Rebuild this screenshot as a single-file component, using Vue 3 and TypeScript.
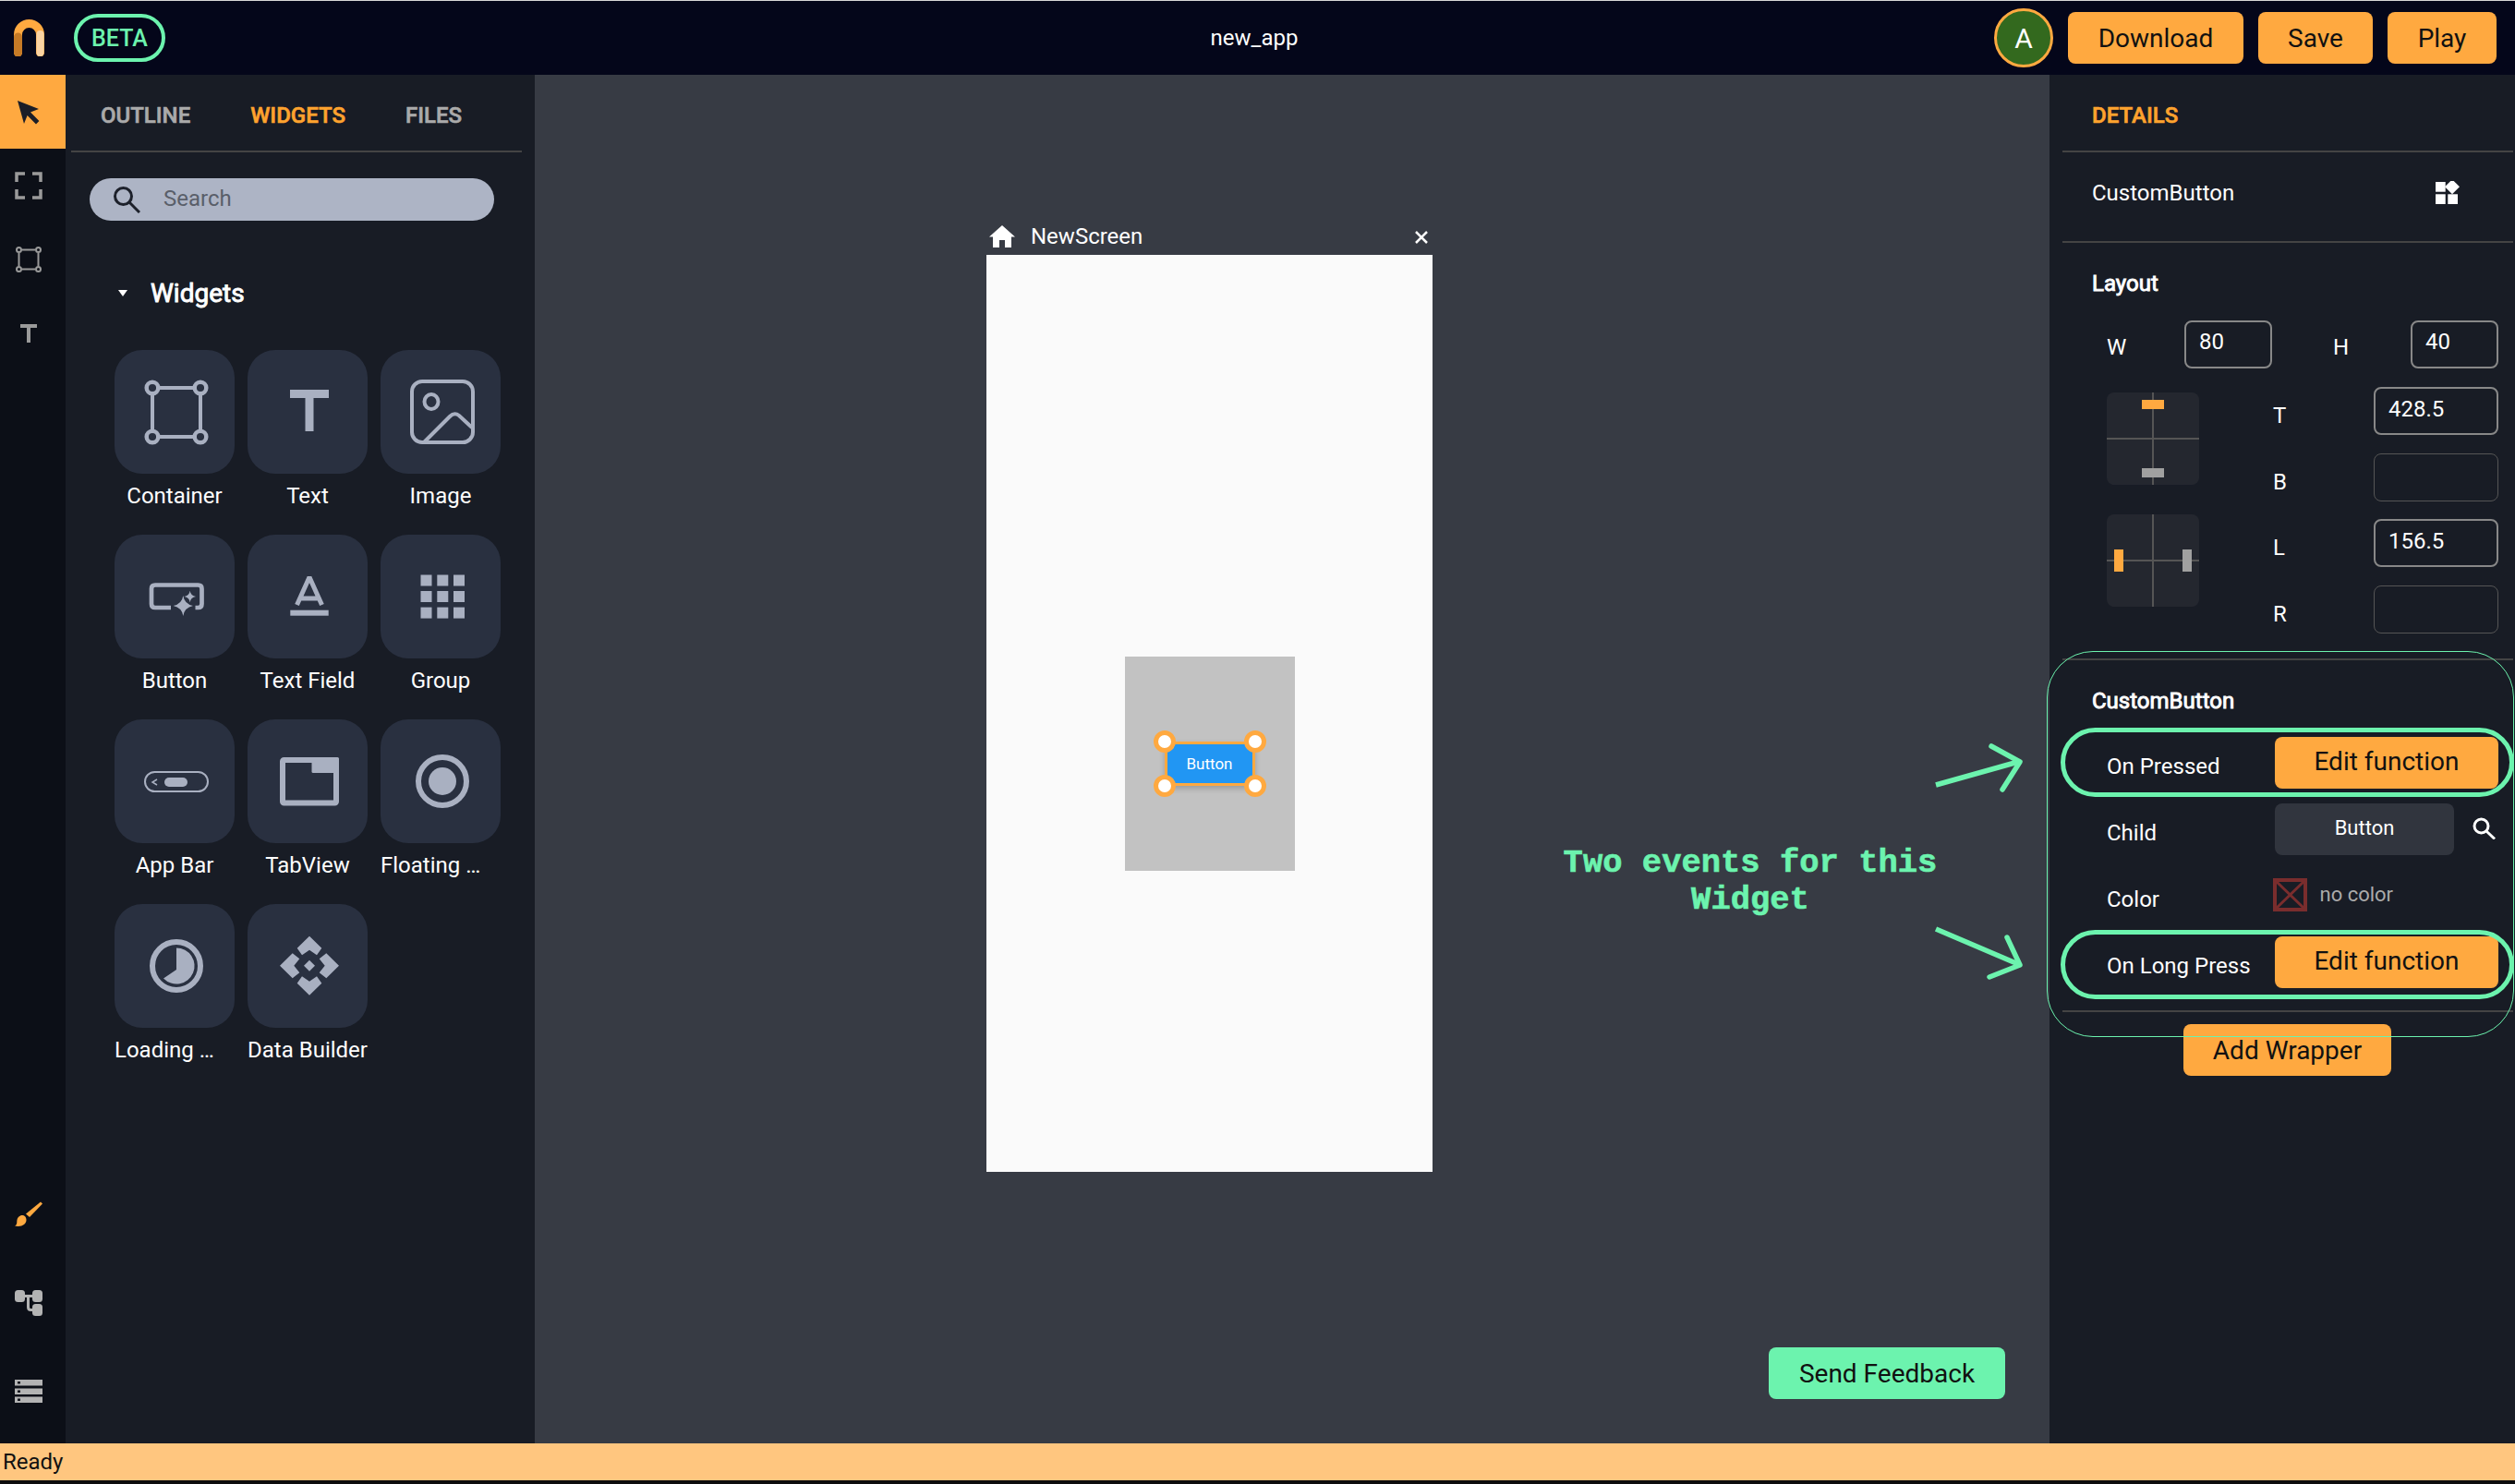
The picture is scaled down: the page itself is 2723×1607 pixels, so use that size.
<template>
  <div class="app">
    <header class="topbar">
      <div class="brand">
        <svg class="logo" width="33" height="40" viewBox="0 0 33 40">
          <path d="M4.5 36V16.5a12 12 0 0 1 24 0V36" fill="none" stroke="#ffa940" stroke-width="9" stroke-linecap="round" />
          <path d="M4.5 36V19" fill="none" stroke="#c67a26" stroke-width="9" stroke-linecap="round" />
          <path d="M28.5 36V16" fill="none" stroke="#fbd3a3" stroke-width="8" stroke-linecap="round" />
        </svg>
        <span class="beta">BETA</span>
      </div>
      <div class="title">new_app</div>
      <div class="actions">
        <div class="avatar">A</div>
        <button class="btn download">Download</button>
        <button class="btn save">Save</button>
        <button class="btn play">Play</button>
      </div>
    </header>

    <main class="main">
      <nav class="rail">
        <div class="rail-item active">
          <svg width="26" height="27" viewBox="0 0 26 27"><path d="M1 1l23 9-9 3.6 9.4 9.4-3.4 3.4-9.4-9.4L8 26z" fill="#1b1e27" /></svg>
        </div>
        <div class="rail-item">
          <svg width="30" height="30" viewBox="0 0 30 30" fill="none" stroke="#9a9a9a" stroke-width="3.5"><path d="M2 11V2h9M19 2h9v9M28 19v9h-9M11 28H2v-9" /></svg>
        </div>
        <div class="rail-item">
          <svg width="28" height="28" viewBox="0 0 28 28" fill="none" stroke="#9a9a9a" stroke-width="2"><path d="M7 3.500h14M7 24.500h14M3.500 7v14M24.500 7v14" /><circle cx="3.500" cy="3.500" r="2.500" /><circle cx="24.500" cy="3.500" r="2.500" /><circle cx="3.500" cy="24.500" r="2.500" /><circle cx="24.500" cy="24.500" r="2.500" /></svg>
        </div>
        <div class="rail-item">
          <svg width="18" height="20" viewBox="0 0 18 20" fill="#9a9a9a"><path d="M0 0h18v4H11v16H7V4H0z" /></svg>
        </div>
        <div class="rail-bottom">
          <div class="rail-item tall">
            <svg width="30" height="28" viewBox="0 0 30 28" fill="#ffa940"><path d="M28 0.500l2 2-14 14.500-4-3.500z" /><path d="M6 15.500c3-1.500 6.500 0.500 6.500 4.500 0 5-5.500 8-12.500 6.500 3-1.500 2-3.500 2.500-6.500 0.300-2 1.800-3.700 3.500-4.500z" /></svg>
          </div>
          <div class="rail-item tall">
            <svg width="30" height="28" viewBox="0 0 30 28"><g fill="#b3b3b3"><rect x="0" y="0" width="11" height="13" rx="3.500" /><rect x="19" y="0" width="11" height="13" rx="3.500" /><rect x="19" y="15" width="11" height="13" rx="3.500" /></g><path d="M11 6.500h8M14.500 6.500v12q0 3 3 3H20" fill="none" stroke="#b3b3b3" stroke-width="3" /></svg>
          </div>
          <div class="rail-item tall">
            <svg width="30" height="26" viewBox="0 0 30 26"><g fill="#b3b3b3"><rect y="0" width="30" height="6.500" /><rect y="9.500" width="30" height="6.500" /><rect y="18.500" width="30" height="6.500" /></g><g fill="#15171f"><rect x="3" y="2" width="3" height="2.500" /><rect x="3" y="11.500" width="3" height="2.500" /><rect x="3" y="20.500" width="3" height="2.500" /></g></svg>
          </div>
        </div>
      </nav>

      <aside class="left-panel">
        <div class="tabs">
          <span class="tab">OUTLINE</span>
          <span class="tab current">WIDGETS</span>
          <span class="tab">FILES</span>
        </div>
        <div class="tabs-line"></div>
        <div class="search">
          <svg width="30" height="30" viewBox="0 0 30 30" fill="none" stroke="#1d212b" stroke-width="3"><circle cx="11.500" cy="11.500" r="9" /><path d="M18 18l11 11" /></svg>
          <span class="search-text">Search</span>
        </div>
        <div class="group-head">
          <svg width="10" height="7" viewBox="0 0 10 7"><path d="M0 0h10L5 7z" fill="#fff" /></svg>
          <span>Widgets</span>
        </div>
        <div class="tiles">
          <div class="tile" v-for="item in widgets" :key="item.name">
            <svg class="tile-icon" width="130" height="134" viewBox="0 0 130 134" v-html="item.icon"></svg>
            <div class="tile-label" :class="{ cut: item.cut }">{{ item.name }}</div>
          </div>
        </div>
      </aside>

      <section class="canvas">
        <div class="frame">
          <div class="frame-head">
            <svg width="28" height="24" viewBox="0 0 28 24"><path d="M14 0L0 12.500h4V24h7v-8h6v8h7V12.500h4z" fill="#fff" /></svg>
            <span>NewScreen</span>
            <svg class="close" width="14" height="14" viewBox="0 0 14 14"><path d="M1 1l12 12M13 1L1 13" stroke="#fff" stroke-width="2.500" /></svg>
          </div>
          <div class="screen">
            <div class="holder">
              <div class="flat-btn">
                Button
                <i class="handle tl"></i><i class="handle tr"></i><i class="handle bl"></i><i class="handle br"></i>
              </div>
            </div>
          </div>
        </div>

        <div class="note">Two events for this<br />Widget</div>
        <svg class="arrows" width="105" height="265" viewBox="2090 801 105 265" fill="none" stroke="#6cf3ae" stroke-width="5.500">
          <path d="M2096 850L2185 825" />
          <path d="M2156 808L2187 825L2168 855" stroke-linecap="round" stroke-linejoin="round" />
          <path d="M2096 1006L2185 1044" />
          <path d="M2173 1015L2187 1045L2154 1058" stroke-linecap="round" stroke-linejoin="round" />
        </svg>
        <button class="feedback">Send Feedback</button>
      </section>

      <aside class="right-panel">
        <div class="details-head">DETAILS</div>
        <div class="line"></div>
        <div class="name-row">
          <span>CustomButton</span>
          <svg width="26" height="26" viewBox="0 0 26 26" fill="#fff"><rect x="0" y="1" width="10.700" height="10.700" /><rect x="0" y="14.300" width="10.700" height="10.700" /><rect x="13.300" y="14.300" width="10.700" height="10.700" /><path d="M18 -1.700l8 8-8 8-8-8z" /></svg>
        </div>
        <div class="line"></div>

        <h3 class="section-title layout-title">Layout</h3>
        <div class="size-row">
          <span class="lab w-lab">W</span>
          <div class="field strong small">80</div>
          <span class="lab h-lab">H</span>
          <div class="field strong small">40</div>
        </div>
        <div class="position">
          <div class="anchors">
            <div class="anchor">
              <i class="mark horiz top-mark on"></i>
              <i class="mark horiz bottom-mark"></i>
            </div>
            <div class="anchor">
              <i class="mark vert left-mark on"></i>
              <i class="mark vert right-mark"></i>
            </div>
          </div>
          <div class="offsets">
            <template v-for="row in offsets" :key="row.label">
              <span class="lab">{{ row.label }}</span>
              <div class="field" :class="{ strong: row.value }">{{ row.value }}</div>
            </template>
          </div>
        </div>

        <div class="line custom-line"></div>
        <h3 class="section-title custom-title">CustomButton</h3>
        <div class="prop-row">
          <span class="prop-label">On Pressed</span>
          <button class="btn edit">Edit function</button>
        </div>
        <div class="prop-row">
          <span class="prop-label">Child</span>
          <div class="child-box">Button</div>
          <svg class="child-search" width="25" height="24" viewBox="0 0 25 24" fill="none" stroke="#fff" stroke-width="3"><circle cx="9.500" cy="9.500" r="7.500" /><path d="M15 15l9 8.500" /></svg>
        </div>
        <div class="prop-row">
          <span class="prop-label">Color</span>
          <svg class="swatch" width="37" height="36" viewBox="0 0 37 36" fill="none" stroke="#7a2d2d" stroke-width="4"><rect x="2" y="2" width="33" height="32" /><path d="M3 3l31 30M34 3L3 33" stroke-width="3" /></svg>
          <span class="no-color">no color</span>
        </div>
        <div class="prop-row">
          <span class="prop-label">On Long Press</span>
          <button class="btn edit">Edit function</button>
        </div>
        <div class="line wrap-line"></div>
        <button class="btn wrapper">Add Wrapper</button>

        <div class="ring outer"></div>
        <div class="ring pill first"></div>
        <div class="ring pill second"></div>
      </aside>
    </main>

    <footer class="status">Ready</footer>
  </div>
</template>

<script setup lang="ts">
interface WidgetTile {
  name: string;
  icon: string;
  cut?: boolean;
}

const line = 'fill="none" stroke="#a9b0c1"';
const solid = 'fill="#a9b0c1"';

const widgets: WidgetTile[] = [
  {
    name: 'Container',
    icon: `<g ${line} stroke-width="4.500"><path d="M47 41h40M47 94h40M41 47v41M93 47v41" stroke-width="4"/><circle cx="41" cy="41" r="6.300"/><circle cx="93" cy="41" r="6.300"/><circle cx="41" cy="94" r="6.300"/><circle cx="93" cy="94" r="6.300"/></g>`,
  },
  { name: 'Text', icon: `<path ${solid} d="M46 43h42v9H71.500v36h-9V52H46z"/>` },
  {
    name: 'Image',
    icon: `<g ${line} stroke-width="4"><rect x="34" y="34" width="66" height="66" rx="11"/><ellipse cx="55" cy="56" rx="7.500" ry="8"/><path d="M47 100L75 72q5-5 10-1l14 13"/></g>`,
  },
  {
    name: 'Button',
    icon: `<path ${line} stroke-width="4.700" d="M61 79H44q-4 0-4-4V58.500q0-4 4-4H90.500q4 0 4 4V75q0 4-4 4h-3"/><path ${solid} d="M74.300 66q1.300 9 10.700 11q-9.400 2-10.700 11q-1.300-9-10.700-11q9.400-2 10.700-11zM81.700 60.700q.8 5.500 6.300 6.300q-5.500.8-6.300 6.300q-.8-5.500-6.300-6.300q5.500-.8 6.300-6.300z"/>`,
  },
  {
    name: 'Text Field',
    icon: `<path ${line} stroke-width="5" stroke-linejoin="bevel" d="M53.500 76L67 46l13.500 30M57 69h20"/><rect ${solid} x="46.300" y="81.700" width="41.400" height="6"/>`,
  },
  {
    name: 'Group',
    icon: `<g ${solid}>${[43.5, 61.3, 79]
      .map((x) => [43.5, 61, 78.6].map((y) => `<rect x="${x}" y="${y}" width="12" height="12"/>`).join(''))
      .join('')}</g>`,
  },
  {
    name: 'App Bar',
    icon: `<rect ${line} stroke-width="2" x="33" y="57" width="68" height="21" rx="10.500"/><rect ${solid} x="54" y="63" width="25" height="10" rx="5"/><path ${line} stroke-width="1.500" d="M46 65l-5 3 5 3"/>`,
  },
  {
    name: 'TabView',
    icon: `<rect ${line} stroke-width="6" x="38" y="44" width="58" height="46.500" rx="1.500"/><rect ${solid} x="69.500" y="41" width="29.500" height="17" rx="1.500"/>`,
  },
  {
    name: 'Floating …',
    cut: true,
    icon: `<circle ${line} stroke-width="6" cx="67" cy="67" r="26"/><circle ${solid} cx="67" cy="67" r="15"/>`,
  },
  {
    name: 'Loading …',
    cut: true,
    icon: `<circle ${line} stroke-width="6" cx="67" cy="67" r="26"/><path ${solid} d="M67 47.500A19.500 19.500 0 1 1 53 80.500L67 71z"/>`,
  },
  {
    name: 'Data Builder',
    icon: `<g ${solid} transform="translate(67 66.700)"><path d="M0-32L13.300-19 8-11.500 0-17-8-11.500-13.300-19z"/><path d="M0 32L13.300 19 8 11.500 0 17-8 11.500-13.300 19z"/><path d="M-32 0L-18.300-13.500-10.700-7.500-16.700 0-10.700 7.500-18.300 13.500z"/><path d="M32 0L18.300-13.500 10.700-7.500 16.700 0 10.700 7.500 18.300 13.500z"/><path d="M0-6L6 0 0 6-6 0z"/></g>`,
  },
];

const offsets = [
  { label: 'T', value: '428.5' },
  { label: 'B', value: '' },
  { label: 'L', value: '156.5' },
  { label: 'R', value: '' },
];
</script>

<style>
html,
body {
  margin: 0;
  background: #0d0d0d;
}
</style>

<style scoped>
.app {
  width: 2723px;
  height: 1607px;
  display: flex;
  flex-direction: column;
  box-sizing: border-box;
  border-top: 1px solid #d8d8d8;
  padding-bottom: 4px;
  overflow: hidden;
  background: #0d0d0d;
  color: #fff;
  font-family: Roboto, "Liberation Sans", sans-serif;
  font-size: 24px;
}

.topbar {
  height: 80px;
  flex: none;
  display: grid;
  grid-template-columns: 1fr auto 1fr;
  align-items: center;
  background: #04061a;
}

.brand {
  display: flex;
  align-items: center;
  padding-left: 15px;
}

.logo {
  margin-right: 32px;
}

.beta {
  width: 99px;
  height: 52px;
  box-sizing: border-box;
  display: flex;
  align-items: center;
  justify-content: center;
  border: 4px solid #6cf3ae;
  border-radius: 26px;
  color: #6cf3ae;
  font-size: 25px;
  font-weight: 500;
}

.title {
  margin-right: 7px;
  font-size: 24px;
}

.actions {
  display: flex;
  align-items: center;
  justify-content: flex-end;
  gap: 16px;
  padding-right: 20px;
}

.avatar {
  width: 64px;
  height: 64px;
  box-sizing: border-box;
  display: flex;
  align-items: center;
  justify-content: center;
  border: 3px solid #ffa940;
  border-radius: 50%;
  background: #33691e;
  font-size: 30px;
}

.btn {
  height: 56px;
  padding: 0;
  border: 0;
  border-radius: 8px;
  background: #ffa940;
  color: #111;
  font-family: inherit;
  font-size: 28px;
}

.download {
  width: 190px;
}

.save {
  width: 124px;
}

.play {
  width: 118px;
}

.main {
  flex: 1;
  display: flex;
  min-height: 0;
}

.rail {
  width: 71px;
  flex: none;
  display: flex;
  flex-direction: column;
  padding-bottom: 8px;
  box-sizing: border-box;
  background: #0c0f17;
}

.rail-item {
  height: 80px;
  box-sizing: border-box;
  display: flex;
  align-items: center;
  justify-content: center;
  padding-right: 9px;
}

.rail-item.active {
  background: #ffa940;
}

.rail-item.tall {
  height: 96px;
}

.rail-bottom {
  margin-top: auto;
}

.left-panel {
  width: 508px;
  flex: none;
  background: #181c25;
}

.tabs {
  height: 82px;
  box-sizing: border-box;
  display: flex;
  align-items: center;
  gap: 65px;
  padding: 6px 0 0 38px;
}

.tab {
  color: #aaa;
  font-size: 24px;
  font-weight: 500;
  -webkit-text-stroke: 0.6px currentColor;
}

.tab.current {
  color: #ffa32e;
}

.tabs-line {
  height: 2px;
  margin: 0 14px 0 6px;
  background: #444;
}

.search {
  width: 438px;
  height: 46px;
  box-sizing: border-box;
  display: flex;
  align-items: center;
  gap: 25px;
  margin: 28px 0 0 26px;
  padding-left: 25px;
  border-radius: 23px;
  background: #adb4c5;
  color: #5a5f6a;
}

.search-text {
  margin-top: -3px;
}

.group-head {
  height: 40px;
  display: flex;
  align-items: center;
  gap: 25px;
  margin: 58px 0 0 57px;
  font-size: 28px;
  -webkit-text-stroke: 0.9px #fff;
}

.tiles {
  display: grid;
  grid-template-columns: repeat(3, 130px);
  grid-auto-rows: 200px;
  column-gap: 14px;
  margin: 42px 0 0 53px;
}

.tile-icon {
  display: block;
  border-radius: 30px;
  background: #293040;
}

.tile-label {
  margin-top: 10px;
  line-height: 28px;
  text-align: center;
  white-space: nowrap;
}

.tile-label.cut {
  text-align: left;
}

.canvas {
  flex: 1;
  position: relative;
  box-sizing: border-box;
  padding: 163px 0 0 489px;
  background: #373b44;
}

.frame {
  width: 483px;
}

.frame-head {
  height: 32px;
  display: flex;
  gap: 17px;
  padding-left: 3px;
  line-height: 24px;
  align-items: flex-start;
}

.close {
  margin: 6px 5px 0 auto;
}

.screen {
  height: 993px;
  box-sizing: border-box;
  display: flex;
  justify-content: center;
  padding-top: 435px;
  background: #fafafa;
}

.holder {
  width: 184px;
  height: 232px;
  display: flex;
  align-items: center;
  justify-content: center;
  background: #c2c2c2;
}

.flat-btn {
  position: relative;
  width: 98px;
  height: 48px;
  box-sizing: border-box;
  display: flex;
  align-items: center;
  justify-content: center;
  border: 3px solid #ffa940;
  background: #2196f3;
  box-shadow: 0 3px 6px rgba(0, 0, 0, 0.2);
  font-size: 17px;
}

.handle {
  position: absolute;
  width: 24px;
  height: 24px;
  box-sizing: border-box;
  border: 5px solid #ffa940;
  border-radius: 50%;
  background: #fff;
}

.tl {
  left: -15px;
  top: -15px;
}

.tr {
  right: -15px;
  top: -15px;
}

.bl {
  left: -15px;
  bottom: -15px;
}

.br {
  right: -15px;
  bottom: -15px;
}

.note {
  position: absolute;
  left: 1066px;
  top: 834px;
  width: 500px;
  color: #6cf3ae;
  font-family: "Liberation Mono", monospace;
  font-size: 35.5px;
  font-weight: 700;
  line-height: 40px;
  text-align: center;
  -webkit-text-stroke: 0.6px #6cf3ae;
}

.arrows {
  position: absolute;
  left: 1511px;
  top: 720px;
}

.feedback {
  position: absolute;
  right: 48px;
  bottom: 48px;
  width: 256px;
  height: 56px;
  padding: 0;
  border: 0;
  border-radius: 8px;
  background: #6cf3ae;
  color: #111;
  font-family: inherit;
  font-size: 28px;
}

.right-panel {
  width: 504px;
  flex: none;
  position: relative;
  background: #181c25;
}

.details-head {
  height: 82px;
  box-sizing: border-box;
  padding: 30px 0 0 46px;
  line-height: 28px;
  color: #ffa32e;
  font-size: 24px;
  font-weight: 500;
  -webkit-text-stroke: 0.6px #ffa32e;
}

.line {
  height: 2px;
  margin: 0 2px 0 14px;
  background: #444;
}

.name-row {
  height: 96px;
  box-sizing: border-box;
  display: flex;
  align-items: center;
  justify-content: space-between;
  padding: 0 60px 9px 46px;
}

.section-title {
  margin: 0;
  padding-left: 46px;
  font-size: 24px;
  font-weight: 400;
  line-height: 28px;
  -webkit-text-stroke: 0.9px #fff;
}

.layout-title {
  margin-top: 30px;
}

.size-row {
  display: flex;
  margin: 26px 0 0 62px;
}

.lab {
  padding-top: 7px;
  line-height: 44px;
}

.w-lab {
  width: 84px;
}

.h-lab {
  width: 84px;
  margin-left: 66px;
}

.field {
  height: 52px;
  box-sizing: border-box;
  padding-left: 14px;
  border: 1.5px solid #555;
  border-radius: 8px;
  line-height: 42px;
}

.field.strong {
  border: 2px solid #888;
}

.field.small {
  width: 95px;
}

.position {
  display: flex;
  margin: 20px 0 0 62px;
}

.anchors {
  display: flex;
  flex-direction: column;
  gap: 32px;
  padding-top: 6px;
}

.anchor {
  position: relative;
  width: 100px;
  height: 100px;
  border-radius: 8px;
  background: linear-gradient(#555, #555) center / 2px 100% no-repeat,
    linear-gradient(#555, #555) center / 100% 2px no-repeat, #24272f;
}

.mark {
  position: absolute;
  background: #a0a0a0;
}

.mark.on {
  background: #ffa940;
}

.horiz {
  left: 38px;
  width: 24px;
  height: 10px;
}

.vert {
  top: 38px;
  width: 10px;
  height: 24px;
}

.top-mark {
  top: 8px;
}

.bottom-mark {
  bottom: 8px;
}

.left-mark {
  left: 8px;
}

.right-mark {
  right: 8px;
}

.offsets {
  display: grid;
  grid-template-columns: 109px 135px;
  grid-auto-rows: 51.5px;
  row-gap: 20px;
  margin-left: 80px;
}

.offsets .lab {
  padding-top: 9px;
}

.offsets .field {
  line-height: 44px;
}

.custom-line {
  margin-top: 28px;
}

.custom-title {
  margin: 30px 0 25px;
}

.prop-row {
  height: 56px;
  display: flex;
  padding-left: 62px;
  margin-bottom: 16px;
}

.prop-label {
  width: 182px;
  padding-top: 18px;
  line-height: 28px;
}

.edit {
  width: 242px;
  padding-bottom: 3px;
}

.child-box {
  width: 194px;
  box-sizing: border-box;
  display: flex;
  align-items: center;
  justify-content: center;
  padding-bottom: 3px;
  border-radius: 8px;
  background: #31353e;
  font-size: 22px;
}

.child-search {
  margin: 15px 0 0 20px;
}

.swatch {
  margin: 9px 14px 0 -2.500px;
}

.no-color {
  padding-top: 13px;
  line-height: 28px;
  color: #aaa;
  font-size: 22px;
}

.wrap-line {
  margin-top: 24px;
}

.wrapper {
  display: block;
  width: 225px;
  margin: 13px 0 0 145px;
}

.ring {
  position: absolute;
  box-sizing: border-box;
  pointer-events: none;
}

.outer {
  left: -3px;
  top: 624px;
  width: 506px;
  height: 418px;
  border: 1.5px solid #6cf3ae;
  border-radius: 50px;
}

.pill {
  left: 12px;
  width: 491px;
  height: 75px;
  border: 5px solid #6cf3ae;
  border-radius: 38px;
}

.first {
  top: 707px;
}

.second {
  top: 926px;
}

.status {
  height: 40px;
  flex: none;
  padding-left: 3px;
  background: #ffc67f;
  color: #111;
  font-size: 24px;
  line-height: 40px;
}
</style>
